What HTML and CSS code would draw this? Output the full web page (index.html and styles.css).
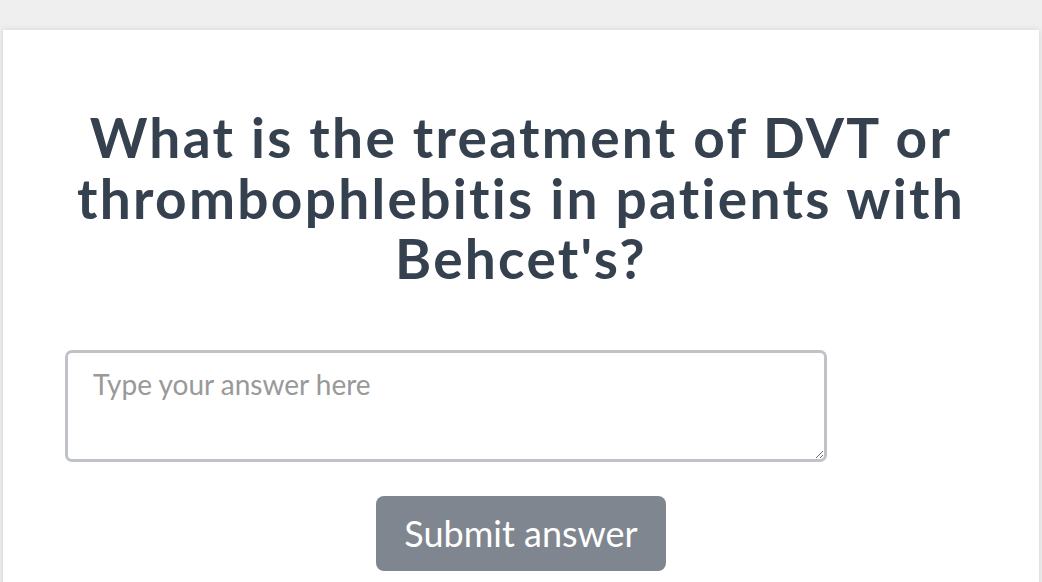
FILE: index.html
```html
<!DOCTYPE html>
<html>

<head>
  <meta charset="utf-8" />
  <title>Question</title>
  <link rel="stylesheet" href="styles.css">
</head>

<body>
  <div class="card">
    <h1 class="question">What is the treatment of DVT or thrombophlebitis in patients with Behcet's?</h1>

    <form class="answer-form">
      <textarea class="answer" placeholder="Type your answer here"></textarea>
      <button type="button" class="submit">Submit answer</button>
    </form>
  </div>
</body>

</html>
```

FILE: styles.css
```css
* {
  margin: 0;
  padding: 0;
  box-sizing: border-box;
  font-variant-ligatures: none;
}

html,
body {
  height: 100%;
  overflow: hidden;
  background-color: #efefef;
  font-family: "Lato", "Helvetica Neue", "Arial", sans-serif;
}

.card {
  margin: 30px 3px 0 3px;
  height: 560px;
  background-color: white;
  box-shadow: 0 0 6px rgba(0, 0, 0, 0.12);
  padding: 77px 40px 0 40px;
}

.question {
  font-family: "Lato", sans-serif;
  font-weight: 700;
  font-size: 55px;
  line-height: 60.5px;
  letter-spacing: 2.3px;
  color: #36414f;
  text-align: center;
}

.answer-form {
  display: flex;
  flex-direction: column;
  align-items: center;
  margin-top: 61px;
}

.answer {
  align-self: flex-start;
  margin-left: 22px;
  width: 762px;
  height: 112px;
  border: 3px solid #bfc3c8;
  border-radius: 7px;
  padding: 14px 25px 10px;
  font-family: "Lato", sans-serif;
  font-size: 28px;
  color: #333;
  resize: vertical;
  outline: none;
}

.answer::placeholder {
  color: #999;
}

.submit {
  margin-top: 34px;
  height: 75px;
  padding: 0 28px;
  border: none;
  border-radius: 8px;
  background-color: #7f868f;
  color: white;
  font-family: "Lato", sans-serif;
  font-size: 36px;
}
```
